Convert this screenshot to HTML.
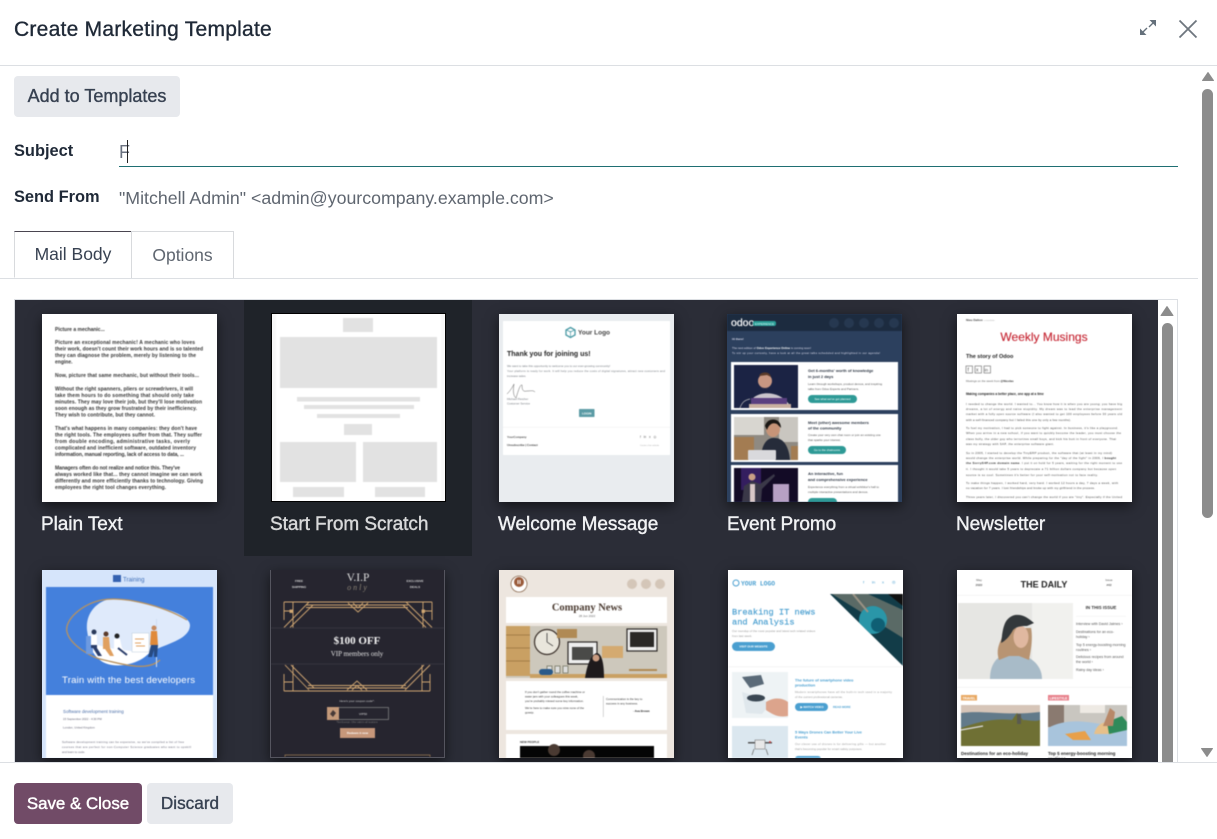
<!DOCTYPE html>
<html lang="en"><head><meta charset="utf-8"><title>Create Marketing Template</title>
<style>
html,body{margin:0;padding:0;width:1217px;height:839px;overflow:hidden;background:#fff;font-family:"Liberation Sans",sans-serif;color:#374151}
.a{position:absolute}
.btn{position:absolute;border-radius:4px;display:flex;align-items:center;justify-content:center;font-size:18px;-webkit-text-stroke:.35px currentColor;box-sizing:border-box}
.sec{background:#e7e9ed;color:#374151}
.lab{position:absolute;font-size:16.4px;color:#1f2937;font-weight:bold;line-height:22px;white-space:nowrap}
.tab{position:absolute;top:231px;height:47px;box-sizing:border-box;border:1px solid #d8dadd;display:flex;align-items:center;justify-content:center;font-size:17.5px;background:#fff}
.panel{position:absolute;left:15px;top:300px;width:1143px;height:462px;background:#2b2d37;overflow:hidden}
.sel{position:absolute;left:229px;top:0;width:228px;height:256px;background:#1f2329}
.t{position:absolute;width:175px;height:188px;box-shadow:0 4px 12px rgba(0,0,0,.55);overflow:hidden}
.t svg{display:block;width:175px;height:188px;filter:blur(.4px)}
.n{position:absolute;top:213px;font-size:19px;line-height:24px;color:#f1f2f4;white-space:nowrap;-webkit-text-stroke:.4px currentColor;letter-spacing:-.06px}
text{font-family:"Liberation Sans",sans-serif}
.se{font-family:"Liberation Serif",serif}
.mo{font-family:"Liberation Mono",monospace}
.b{font-weight:bold}
.m{text-anchor:middle}
</style></head><body>

<div class="a" style="left:14px;top:16px;font-size:21px;line-height:28px;color:#1f2937;-webkit-text-stroke:.35px #1f2937;white-space:nowrap;letter-spacing:.25px">Create Marketing Template</div>
<svg class="a" style="left:1138px;top:18px" width="22" height="22" viewBox="0 0 22 22"><path d="M2 17V10.500L8.500 17ZM18 2V8.500L11.500 2Z" fill="#65707b"/><path d="M4.500 14.500L9 10M15.500 4.500L11 9" stroke="#65707b" stroke-width="1.400" fill="none"/></svg>
<svg class="a" style="left:1177px;top:18px" width="22" height="22" viewBox="0 0 22 22"><path d="M2.500 2.500L19.500 19.500M19.500 2.500L2.500 19.500" stroke="#6e767e" stroke-width="1.800" fill="none"/></svg>
<div class="a" style="left:0;top:65px;width:1217px;height:1px;background:#dcdfe3"></div>

<div class="btn sec" style="left:14px;top:76px;width:166px;height:41px">Add to Templates</div>
<div class="lab" style="left:14px;top:140px">Subject</div>
<div class="a" style="left:119px;top:140px;font-size:18px;line-height:24px;color:#6b7280">F</div>
<div class="a" style="left:127px;top:140px;width:1px;height:23px;background:#222"></div>
<div class="a" style="left:119px;top:165.500px;width:1059px;height:1px;background:#1f6f73"></div>
<div class="lab" style="left:14px;top:186px">Send From</div>
<div class="a" style="left:119px;top:186px;font-size:17.750px;line-height:24px;color:#5f6670;white-space:nowrap">"Mitchell Admin" &lt;admin@yourcompany.example.com&gt;</div>

<div class="a" style="left:0;top:278px;width:1198px;height:1px;background:#dcdfe3"></div>
<div class="tab" style="left:14px;width:118px;border-top-color:#4a4550;border-bottom-color:#fff;color:#374151">Mail Body</div>
<div class="tab" style="left:131px;width:103px;color:#5f6670;border-bottom:0">Options</div>

<div class="a" style="left:14px;top:299px;width:1164px;height:464px;box-sizing:border-box;border:1px solid #dcdfe3;border-bottom:0"></div>
<div class="panel">
<div class="sel"></div>

<!-- Plain Text -->
<div class="t" style="left:27px;top:14px;background:#fff"><svg viewBox="0 0 175 188" style="filter:blur(.6px)"><g font-size="5" fill="#333" style="font-weight:bold">
<text x="13" y="17">Picture a mechanic...</text>
<text x="13" y="30" textLength="140">Picture an exceptional mechanic! A mechanic who loves</text>
<text x="13" y="36.500" textLength="148">their work, doesn't count their work hours and is so talented</text>
<text x="13" y="43" textLength="141">they can diagnose the problem, merely by listening to the</text>
<text x="13" y="49.500">engine.</text>
<text x="13" y="63" textLength="144">Now, picture that same mechanic, but without their tools...</text>
<text x="13" y="76.500" textLength="138">Without the right spanners, pliers or screwdrivers, it will</text>
<text x="13" y="83" textLength="139">take them hours to do something that should only take</text>
<text x="13" y="89.500" textLength="147">minutes. They may love their job, but they'll lose motivation</text>
<text x="13" y="96" textLength="142">soon enough as they grow frustrated by their inefficiency.</text>
<text x="13" y="102.500" textLength="100">They wish to contribute, but they cannot.</text>
<text x="13" y="116" textLength="142">That's what happens in many companies: they don't have</text>
<text x="13" y="122.500" textLength="147">the right tools. The employees suffer from that. They suffer</text>
<text x="13" y="129" textLength="135">from double encoding, administrative tasks, overly</text>
<text x="13" y="135.500" textLength="141">complicated and inefficient software, outdated inventory</text>
<text x="13" y="142" textLength="129">information, manual reporting, lack of access to data, ...</text>
<text x="13" y="155.500" textLength="125">Managers often do not realize and notice this. They've</text>
<text x="13" y="162" textLength="147">always worked like that... they cannot imagine we can work</text>
<text x="13" y="168.500" textLength="148">differently and more efficiently thanks to technology. Giving</text>
<text x="13" y="175" textLength="111">employees the right tool changes everything.</text>
</g></svg></div>
<div class="n" style="left:26px">Plain Text</div>

<!-- Scratch -->
<div class="t" style="left:256px;top:13px;height:189px;box-sizing:border-box;border:1px solid #000;background:#fff;box-shadow:none"><svg viewBox="1 1 173 187" style="width:173px;height:187px" preserveAspectRatio="none"><rect width="175" height="188" fill="#f7f7f7"/><rect x="5" y="0" width="165" height="188" fill="#fff"/><g fill="#e2e2e2"><rect x="72" y="5" width="30" height="14"/><rect x="9" y="24" width="157" height="51"/><rect x="26" y="84" width="123" height="4.500"/><rect x="33" y="92" width="110" height="4"/><rect x="46" y="101" width="83" height="4"/><rect x="73" y="111" width="28" height="11"/><rect x="9" y="129" width="76" height="40"/><rect x="92" y="129" width="74" height="40"/><rect x="22" y="174" width="51" height="10"/><rect x="104" y="174" width="50" height="10"/></g></svg></div>
<div class="n" style="left:255px;color:#d8d9da">Start From Scratch</div>

<!-- Welcome -->
<div class="t" style="left:484px;top:14px;background:#e9ecef"><svg viewBox="0 0 175 188"><rect x="4" y="7" width="167" height="134" fill="#fff"/>
<path d="M71.500 13.500L76 16V21L71.500 23.500L67 21V16Z" fill="none" stroke="#4a9aa5" stroke-width="1.300"/><path d="M71.500 17V23M67.500 16L71.500 18L75.500 16" fill="none" stroke="#4a9aa5" stroke-width=".7"/>
<text x="79" y="20.500" font-size="6.500" class="b" fill="#444">Your Logo</text>
<text x="8" y="42" font-size="7" class="b" fill="#222">Thank you for joining us!</text>
<g font-size="2.900" fill="#777c82"><text x="8" y="53">We want to take this opportunity to welcome you to our ever-growing community!</text><text x="8" y="58" textLength="158">Your platform is ready for work. It will help you reduce the costs of digital signatures, attract new customers and</text><text x="8" y="63">increase sales.</text><text x="8" y="86">Michael Fletcher</text><text x="8" y="90.500">Customer Service</text></g>
<path d="M8 80C12 76 14 72 15 70C14 76 14 82 17 84C19 78 21 70 23 71C23 76 24 78 28 77C32 77 34 76 36 78" fill="none" stroke="#666" stroke-width=".5"/>
<rect x="80" y="95" width="15.500" height="8" rx=".6" fill="#5b9ba5"/><text x="87.700" y="100.500" font-size="3" class="b m" fill="#fff">LOGIN</text>
<rect x="4" y="113" width="167" height=".6" fill="#eee"/>
<text x="8" y="124" font-size="2.900" class="b" fill="#555">YourCompany</text><text x="8" y="132" font-size="2.900" class="b" fill="#444">Unsubscribe | Contact</text><text x="141" y="124" font-size="3.300" fill="#666">f&#160;&#160;&#160;in&#160;&#160;&#160;x&#160;&#160;&#160;◎</text><text x="141" y="132" font-size="2" fill="#aaa">Create a free website</text>
</svg></div>
<div class="n" style="left:483px">Welcome Message</div>

<!-- Event -->
<div class="t" style="left:712px;top:14px;background:#2c405e"><svg viewBox="0 0 175 188"><rect width="175" height="17" fill="#1c2b3f"/>
<text x="4" y="12" font-size="10.500" fill="#fff" stroke="#fff" stroke-width=".2">odoo</text><rect x="26" y="7" width="23" height="5" rx="2" fill="#2a9d96"/><text x="37.500" y="11" font-size="3" class="m" fill="#dff">EXPERIENCE</text>
<g fill="#263850"><circle cx="107" cy="9" r="5"/><circle cx="122" cy="9" r="5"/><circle cx="137" cy="9" r="5"/><circle cx="152" cy="9" r="5"/><circle cx="167" cy="9" r="5"/></g>
<g font-size="2.900" fill="#dde"><text x="5" y="26" class="b">Hi there!</text><text x="5" y="35">The next edition of <tspan class="b" fill="#fff">Odoo Experience Online</tspan> is coming soon!</text><text x="5" y="40" textLength="148">To stir up your curiosity, have a look at all the great talks scheduled and highlighted in our agenda!</text></g>
<rect x="4" y="48" width="167" height="48" fill="#fff"/><rect x="4" y="100" width="167" height="48" fill="#fff"/><rect x="4" y="151" width="167" height="40" fill="#fff"/>
<rect x="7" y="51" width="64" height="43" fill="#1b2344"/><circle cx="38" cy="67" r="7" fill="#c99782"/><path d="M32 62C34 57 43 57 44 63L40 61Z" fill="#5a3b2a"/><path d="M33 72C34 76 42 76 43 72L42 74L38 75L34 74Z" fill="#76503a"/><path d="M24 88C26 78 50 74 62 90V94H24Z" fill="#c9c4cb"/><rect x="24" y="84" width="36" height="6" fill="#5a3f80"/><rect x="22" y="90" width="42" height="4" fill="#c9b0a0"/><path d="M13 94C15 88 18 86 23 85" stroke="#bbb" fill="none" stroke-width=".7"/>
<rect x="7" y="103" width="64" height="43" fill="#8f8a82"/><rect x="7" y="103" width="30" height="18" fill="#d8d6d0"/><rect x="52" y="103" width="19" height="25" fill="#c9c6c0"/><rect x="7" y="123" width="20" height="23" fill="#a37c52"/><rect x="64" y="132" width="7" height="14" fill="#a37c52"/><ellipse cx="46" cy="115" rx="7" ry="8" fill="#c69478"/><path d="M38 112C40 103 54 103 54 114L50 110C46 108 42 110 40 116Z" fill="#1a1714"/><path d="M34 146C34 128 42 123 48 124C56 124 62 132 63 146Z" fill="#262c3a"/><rect x="21" y="136" width="28" height="10" rx="1" fill="#d9d9dc"/>
<rect x="7" y="154" width="64" height="34" fill="#130b26"/><rect x="14" y="154" width="20" height="22" fill="#4b2b85" opacity=".6"/><circle cx="25" cy="163" r="3.500" fill="#c99f86"/><path d="M15 188L17 172L25 167L33 170L47 160L48 162L35 175L34 188Z" fill="#3a3848"/><rect x="23" y="170" width="5" height="18" fill="#d8c7c7"/><rect x="46" y="170" width="16" height="18" fill="#b7a0c4"/>
<g font-size="4" class="b" fill="#2a3340"><text x="81" y="58">Get 6-months' worth of knowledge</text><text x="81" y="64">in just 2 days</text><text x="81" y="110">Meet (other) awesome members</text><text x="81" y="115.500">of the community</text><text x="81" y="161">An interactive, fun</text><text x="81" y="167">and comprehensive experience</text></g>
<g font-size="3" fill="#555"><text x="81" y="71">Learn through workshops, product demos, and inspiring</text><text x="81" y="76">talks from Odoo Experts and Partners.</text><text x="81" y="122">Create your very own chat room or join an existing one</text><text x="81" y="127">that sparks your interest.</text><text x="81" y="174">Experience everything from a virtual exhibitor's hall to</text><text x="81" y="179">multiple interactive presentations and demos.</text></g>
<g fill="#2e9a96"><rect x="81" y="81" width="49" height="8" rx="4"/><rect x="81" y="132" width="38" height="8" rx="4"/><rect x="81" y="184" width="29" height="8" rx="4"/></g>
<g font-size="2.900" fill="#fff" class="m"><text x="105.500" y="86">See what we've got planned</text><text x="100" y="137">Go to the chatrooms</text></g>
</svg></div>
<div class="n" style="left:712px">Event Promo</div>

<!-- Newsletter -->
<div class="t" style="left:942px;top:14px;background:#fff"><svg viewBox="0 0 175 188"><text x="9" y="7" font-size="3" class="b" fill="#444">Nieu Dalton</text><text x="27" y="7" font-size="2" fill="#aaa">a newsletter</text>
<text x="87" y="27" font-size="12" class="m" fill="#c4222f" stroke="#c4222f" stroke-width=".12">Weekly Musings</text>
<text x="9" y="44" font-size="5.500" class="b" fill="#222">The story of Odoo</text>
<g fill="none" stroke="#666" stroke-width=".6"><rect x="9" y="52" width="6.500" height="7"/><rect x="18" y="52" width="6.500" height="7"/><rect x="27" y="52" width="6.500" height="7"/></g><text x="10.500" y="57.500" font-size="5" fill="#555">f</text><text x="19" y="57.500" font-size="5" fill="#555">x</text><text x="27.500" y="57.500" font-size="4.500" fill="#555">in</text>
<text x="9" y="68" font-size="2.900" fill="#666">Musings on the week from <tspan class="b" fill="#333">@Nicolas</tspan></text>
<text x="9" y="81" font-size="3.200" class="b" fill="#222">Making companies a better place, one app at a time</text>
<g font-size="3" fill="#444">
<text x="9" y="91" textLength="156">I needed to change the world. I wanted to... You know how it is when you are young; you have big</text>
<text x="9" y="96" textLength="156">dreams, a lot of energy and naive stupidity. My dream was to lead the enterprise management</text>
<text x="9" y="101" textLength="156">market with a fully open source software (I also wanted to get 100 employees before 30 years old</text>
<text x="9" y="107" textLength="105">with a self-financed company but I failed this one by only a few months).</text>
<text x="9" y="115" textLength="152">To fuel my motivation, I had to pick someone to fight against. In business, it's like a playground.</text>
<text x="9" y="120" textLength="155">When you arrive in a new school, if you want to quickly become the leader, you must choose the</text>
<text x="9" y="126" textLength="150">class bully, the older guy who terrorizes small boys, and kick his butt in front of everyone. That</text>
<text x="9" y="131" textLength="88">was my strategy with SAP, the enterprise software giant.</text>
<text x="9" y="140" textLength="146">So in 2005, I started to develop the TinyERP product, the software that (at least in my mind)</text>
<text x="9" y="145" textLength="150">would change the enterprise world. While preparing for the "day of the fight" in 2006, I <tspan class="b" fill="#222">bought</tspan></text>
<text x="9" y="150" textLength="156"><tspan class="b" fill="#222">the SorryS4P.com domain name</tspan>. I put it on hold for 5 years, waiting for the right moment to use</text>
<text x="9" y="156" textLength="150">it. I thought it would take 5 years to deprecate a 71 billion dollars company but because open</text>
<text x="9" y="162" textLength="132">source is so cool. Sometimes it's better for your self-motivation not to face reality.</text>
<text x="9" y="170" textLength="152">To make things happen, I worked hard, very hard. I worked 12 hours a day, 7 days a week, with</text>
<text x="9" y="175" textLength="129">no vacation for 7 years. I lost friendships and broke up with my girlfriend in the process.</text>
<text x="9" y="184" textLength="156">Three years later, I discovered you can't change the world if you are "tiny". Especially if the United</text>
</g></svg></div>
<div class="n" style="left:941px">Newsletter</div>

<!-- Training -->
<div class="t" style="left:27px;top:270px;background:#d6e5fb"><svg viewBox="0 0 175 188"><rect x="71" y="5" width="8" height="7" fill="#3562b0"/><text x="81" y="11.500" font-size="6" fill="#3f6fb8">Training</text>
<rect x="4" y="17" width="167" height="108" fill="#4480dc"/><rect x="4" y="125" width="167" height="63" fill="#fff"/>
<path d="M45 60C43 40 60 27 75 29C100 32 148 42 148 55C148 72 115 75 105 85C95 95 70 100 58 90C50 84 47 75 45 60Z" fill="#dfeafb"/><path d="M47 72C60 78 90 82 108 82C98 94 70 100 58 90C53 86 49 80 47 72Z" fill="#fff"/>
<path d="M145 50C120 35 80 26 60 30C40 34 22 50 25 62C28 75 50 88 62 90C80 94 105 102 118 90" fill="none" stroke="#b8925f" stroke-width="1.300"/>
<rect x="44" y="66" width="7" height="18" fill="#6d9ae0"/><rect x="114" y="49" width="1" height="48" fill="#cfdcf1"/>
<g><circle cx="52" cy="62" r="2.500" fill="#2a3a5a"/><path d="M49 65H55V78L60 86H56L51 78H49Z" fill="#2a3d6a"/><path d="M49 65H55V75H49Z" fill="#fff"/><circle cx="64" cy="64" r="2.500" fill="#5a3a2a"/><path d="M61 67H67L68 78L72 86H68L63 79H61Z" fill="#e0a060"/><circle cx="75" cy="66" r="2.500" fill="#222"/><path d="M72 69H78L80 78L86 84H82L75 79H72Z" fill="#fff"/><path d="M76 78L85 85" stroke="#2a3d6a" stroke-width="2"/></g>
<rect x="90" y="63" width="17" height="19" fill="#fff" stroke="#bcd" stroke-width=".5"/><path d="M93 69H102M93 73H99M94 76H103" stroke="#e0a060" stroke-width=".9"/><circle cx="112" cy="58" r="2.500" fill="#c68a60"/><path d="M109 61H115L116 75H108Z" fill="#e08a3a"/><path d="M109 75H116L115 87H112L112 80L110 87H106Z" fill="#274a82"/>
<text x="86.500" y="113" font-size="9.600" class="m" fill="#fff" textLength="133">Train with the best developers</text>
<text x="21" y="143" font-size="4.500" fill="#4a6ea8">Software development training</text>
<g font-size="2.900" fill="#667"><text x="21" y="150">15 September 2022 - 4:30 PM</text><text x="21" y="158.500">London, United Kingdom</text><text x="20" y="173" textLength="122">Software development training can be expensive, so we've compiled a list of free</text><text x="20" y="178" textLength="129">courses that are perfect for non-Computer Science graduates who want to upskill</text><text x="20" y="183">and learn to code.</text></g>
</svg></div>

<!-- VIP -->
<div class="t" style="left:255px;top:270px;background:#26252f;box-sizing:border-box;border-left:1px solid #55555f;border-right:1px solid #55555f;border-bottom:1px solid #55555f"><svg viewBox="1 0 173 187" style="width:173px;height:187px" preserveAspectRatio="none">
<g font-size="3" fill="#ddd" class="m se b"><text x="29" y="12">FREE</text><text x="29" y="18">SHIPPING</text><text x="145" y="12">EXCLUSIVE</text><text x="145" y="18">DEALS</text></g>
<text x="88" y="11" font-size="11.500" class="m se" fill="#ddd">V.I.P</text><text x="88" y="20" font-size="8" font-style="italic" class="m se" fill="#8d8577" letter-spacing="2">only</text>
<g fill="none" stroke="#d2a873" stroke-width=".9"><path d="M14 32H162M36 35H138M36 37.500H138M14 32V50M23 32V58M162 32V50M153 32V58M14 41H23M162 41H153"/><path d="M14 57.500L39 32M20 57.500L43 35M162 57.500L136 32M156 57.500L133 35"/><path d="M78 33L88 42L98 33M83 33L88 38L93 33"/><rect x="20" y="40" width="2.500" height="2.500" fill="#d2a873"/><rect x="152" y="40" width="2.500" height="2.500" fill="#d2a873"/></g>
<path d="M0 58H175M0 94H175" stroke="#3c3c46" stroke-width=".8"/>
<text x="87" y="74" font-size="11" class="m se b" fill="#f4f4f4">$100 OFF</text><text x="87" y="86" font-size="7" class="m se" fill="#e2e2e2">VIP members only</text>
<g fill="none" stroke="#d2a873" stroke-width=".9"><path d="M14 121H160M38 118H136M38 115.500H136M14 104V121M23 95V121M160 104V121M152 95V121M14 112H23M160 112H152"/><path d="M15 95L39 120M21 95L44 118M160 95L135 120M154 95L131 118"/><path d="M77 120L87 111L97 120M82 120L87 115.500L92 120"/></g>
<text x="87" y="132" font-size="3" class="m" fill="#ccc">Here's your coupon code*:</text>
<rect x="57.500" y="137.500" width="61" height="12" fill="none" stroke="#999" stroke-width=".6"/><rect x="57" y="137" width="12" height="13" fill="#c49a7a"/><path d="M60 144L63 140L66 143L63 147Z" fill="#473a38"/><text x="93" y="145" font-size="3" class="m" fill="#ddd">VIP50</text>
<text x="87" y="153" font-size="2.400" class="m" fill="#777">*Not Exempt. Offer valid in all locations</text>
<rect x="70" y="158" width="35" height="10" fill="#c6977a"/><text x="87.500" y="164" font-size="3" class="m b" fill="#fff">Redeem it now</text>
<rect x="15" y="185" width="145" height="6" fill="none" stroke="#b98f5d" stroke-width=".6"/>
</svg></div>

<!-- Company News -->
<div class="t" style="left:484px;top:270px;background:#ede6df"><svg viewBox="0 0 175 188"><circle cx="20" cy="14" r="8" fill="#fff" stroke="#8b6a50" stroke-width=".8"/><circle cx="20" cy="12" r="5" fill="#9a5a3a"/><rect x="18.500" y="10" width="1" height="4" fill="#fff"/><rect x="20.500" y="10" width="1" height="4" fill="#fff"/>
<g fill="#d4c6b8"><circle cx="133" cy="14" r="5"/><circle cx="147" cy="14" r="5"/><circle cx="161" cy="14" r="5"/></g>
<rect x="7" y="27" width="161" height="26" fill="#fff"/><text x="88" y="40.500" font-size="10.500" class="m se b" fill="#4a3a30">Company News</text><text x="88" y="47" font-size="3" class="m" fill="#666">28 Jun 2022</text>
<rect x="7" y="56" width="161" height="52" fill="#cdc8bc"/><rect x="7" y="56" width="24" height="50" fill="#c9a063"/><path d="M7 65H31M7 78H31M7 91H31" stroke="#96703e" stroke-width=".8"/><circle cx="48" cy="72" r="12.500" fill="#e9e6dc" stroke="#3a302a" stroke-width="1.200"/><path d="M48 72V63M48 72L54 76" stroke="#222" stroke-width=".7"/><rect x="69" y="72" width="29" height="22" fill="#eee" stroke="#2e2a28" stroke-width="1.200"/><rect x="73" y="77" width="21" height="13" fill="#4a4a48"/><rect x="128" y="59" width="30" height="22" fill="#eee" stroke="#2e2a28" stroke-width="1.200"/><rect x="131" y="62" width="24" height="15" fill="#2a2826"/><rect x="103" y="76" width="21" height="12" fill="#d4aa70"/><rect x="58" y="59" width="20" height="9" fill="#b08a54"/><rect x="48" y="96" width="5" height="7" fill="#ddd" stroke="#887"/><rect x="56" y="96" width="5" height="7" fill="#ddd" stroke="#887"/><rect x="64" y="96" width="5" height="7" fill="#ddd" stroke="#887"/><rect x="130" y="99" width="28" height="2" fill="#b08a54"/><rect x="31" y="104" width="137" height="4" fill="#c9a063"/><rect x="40" y="99" width="14" height="6" rx="3" fill="#2a5a8a"/><path d="M86 108C88 95 92 84 98 83C104 84 105 98 105 108Z" fill="#1e1a1c"/><circle cx="97" cy="88" r="3.500" fill="#c99b80"/>
<rect x="7" y="111" width="161" height="49" fill="#fff"/>
<g font-size="2.900" fill="#333"><text x="26" y="123">If you don't gather round the coffee machine or</text><text x="26" y="127.500">water jars with your colleagues this week,</text><text x="26" y="132">you're probably missed some key information.</text><text x="26" y="139">We're here to make sure you miss none of the</text><text x="26" y="143.500">gossip.</text><text x="107" y="130">Communication is the key to</text><text x="107" y="134.500">success in any business.</text></g><text x="134" y="142" font-size="2.900" class="b" fill="#222">- Ava Brown</text>
<rect x="104" y="126" width=".6" height="21" fill="#bbb"/>
<rect x="7" y="164" width="161" height="24" fill="#fff"/><text x="21" y="173" font-size="2.900" class="b" fill="#333">NEW PEOPLE</text><rect x="21" y="176" width="134" height="12" fill="#050505"/><circle cx="55" cy="180" r="6" fill="#4a3a32"/><circle cx="90" cy="186" r="6" fill="#4a3a32"/>
</svg></div>

<!-- IT news -->
<div class="t" style="left:713px;top:270px;background:#fff"><svg viewBox="0 0 175 188"><circle cx="8" cy="13" r="3" fill="none" stroke="#4a9fd0"/><text x="13" y="15.500" font-size="6.300" class="mo b" fill="#4a9fd0">YOUR LOGO</text><g font-size="4" fill="#4a9fd0"><text x="135" y="13.500">f</text><text x="144" y="13.500">in</text><text x="154" y="13.500">x</text><text x="164" y="13.500">◎</text></g>
<defs><clipPath id="c"><path d="M102 24H175V96Z"/></clipPath></defs><g clip-path="url(#c)"><rect x="100" y="24" width="75" height="72" fill="#123c48"/><path d="M104 24L175 68V40L140 24Z" fill="#5a6a66"/><circle cx="145" cy="50" r="14" fill="#2a96a8"/><circle cx="150" cy="55" r="7" fill="#0f5f74"/><path d="M160 24L175 36V24Z" fill="#111"/><path d="M125 24L140 42" stroke="#9a9284" stroke-width="2"/></g>
<text x="4" y="44.500" font-size="8.700" class="mo" fill="#4a9fd0" stroke="#4a9fd0" stroke-width=".18">Breaking IT news</text><text x="4" y="54.500" font-size="8.700" class="mo" fill="#4a9fd0" stroke="#4a9fd0" stroke-width=".18">and Analysis</text>
<g font-size="3" fill="#999"><text x="4" y="62">Our roundup of the most popular and latest tech related videos</text><text x="4" y="67">from last week.</text></g><rect x="4" y="72" width="43" height="9" rx="4.500" fill="#4a9fd0"/><text x="25.500" y="77.500" font-size="2.900" class="m b" fill="#fff">VISIT OUR WEBSITE</text><rect y="96.500" width="175" height=".6" fill="#eee"/>
<rect x="4" y="102" width="56" height="46" fill="#eef3f5"/><path d="M14 107L33 105L36 114L22 118Z" fill="#5a6a78"/><path d="M14 122C24 125 38 130 42 134L34 144L18 143Z" fill="#dfe7ec"/><ellipse cx="28" cy="128" rx="9" ry="3.500" fill="#394652"/><path d="M38 132C48 126 56 129 60 132V146C50 148 44 144 38 140Z" fill="#dca48c"/>
<g font-size="3.900" class="mo b" fill="#4a9fd0"><text x="67" y="111.500">The future of smartphone video</text><text x="67" y="116.500">production</text><text x="67" y="163.500">5 Ways Drones Can Better Your Live</text><text x="67" y="168.500">Events</text></g>
<g font-size="3" fill="#999"><text x="67" y="123" textLength="97">Modern smartphones have all the built-in tech used in a majority</text><text x="67" y="128">of the current professional cameras.</text><text x="67" y="175" textLength="91">Our clever use of drones is for delivering gifts — but another</text><text x="67" y="180">that's becoming popular for smart safety purposes.</text></g>
<rect x="67" y="133" width="33" height="8" rx="4" fill="#4a9fd0"/><text x="84" y="138" font-size="2.900" class="m b" fill="#fff">▶ WATCH VIDEO</text><text x="105" y="138" font-size="2.900" class="b" fill="#4a9fd0">READ MORE</text><rect x="67" y="186" width="26" height="6" rx="3" fill="#4a9fd0"/>
<rect x="4" y="156" width="56" height="32" fill="#dbe7ef"/><rect x="20" y="172" width="24" height="1.500" fill="#555"/><rect x="27" y="170" width="10" height="9" fill="#e8e8e8" stroke="#666" stroke-width=".5"/><path d="M26 179L24 185M38 179L40 185" stroke="#666" stroke-width=".7"/><circle cx="42" cy="172" r="1" fill="#c44"/>
</svg></div>

<!-- Daily -->
<div class="t" style="left:942px;top:270px;background:#fff"><svg viewBox="0 0 175 188"><g font-size="3" class="m" fill="#555"><text x="22" y="11">May</text><text x="22" y="16" class="b">2022</text><text x="152" y="11">Issue</text><text x="152" y="16" class="b">#42</text></g><text x="87" y="17.500" font-size="9" class="m b" fill="#222">THE DAILY</text><rect y="25" width="175" height=".7" fill="#f0f0f0"/>
<rect x="1" y="33" width="115" height="76" fill="#e6e6e3"/><rect x="75" y="33" width="41" height="76" fill="#f1f1ee"/><path d="M33 109C33 92 42 84 54 83C68 83 85 92 85 109Z" fill="#a8bbc8"/><path d="M42 90C38 78 44 70 50 58L74 58C76 68 74 80 72 90L62 86L52 86Z" fill="#b89472"/><ellipse cx="64" cy="67" rx="7.500" ry="11" fill="#e0b8a0"/><path d="M44 73C46 60 46 48 58 45C66 44 71 48 77 53L70 56C66 56 60 56 56 60C54 64 50 70 44 73Z" fill="#33383b"/>
<text x="144" y="39" font-size="4.500" class="m b" fill="#333">IN THIS ISSUE</text><rect x="119" y="46" width="50" height=".5" fill="#eee"/>
<g font-size="3.600" fill="#555"><text x="119" y="55">Interview with David Jaimes  ›</text><text x="119" y="63">Destinations for an eco-</text><text x="119" y="68">holiday  ›</text><text x="119" y="76">Top 5 energy-boosting morning</text><text x="119" y="81">routines  ›</text><text x="119" y="88">Delicious recipes from around</text><text x="119" y="93">the world  ›</text><text x="119" y="101">Rainy day ideas  ›</text></g>
<rect y="117" width="175" height=".7" fill="#f0f0f0"/><rect x="4" y="125" width="16" height="5.500" fill="#e8a862"/><text x="12" y="129.500" font-size="3.300" class="m b" fill="#fff">TRAVEL</text><rect x="91" y="125" width="21" height="5.500" fill="#e77f8a"/><text x="101.500" y="129.500" font-size="3.300" class="m b" fill="#fff">LIFESTYLE</text>
<rect x="4" y="135" width="79" height="41" fill="#d6c5b8"/><path d="M4 143C25 140 50 146 83 142V176H4Z" fill="#627a8a"/><path d="M4 158C20 152 38 148 55 150L60 143L66 150C72 150 78 152 83 150V176H4Z" fill="#6f7034"/><path d="M4 160L26 156" stroke="#ddd" stroke-width="1.200"/><rect x="60" y="144" width="4" height="10" fill="#5a5a50"/>
<rect x="91" y="135" width="79" height="41" fill="#c9c6c0"/><rect x="91" y="135" width="16" height="22" fill="#8a7a70"/><rect x="123" y="135" width="25" height="8" fill="#eeeae4"/><path d="M91 176V158C110 148 130 150 170 160V176Z" fill="#a8c4dc"/><path d="M137 164C140 152 150 150 156 155L155 164Z" fill="#e6c08a"/><path d="M150 152L165 146L170 152V160L152 164Z" fill="#2f8a5a"/><path d="M108 164L128 161L134 170H116Z" fill="#e8a04a"/><path d="M146 156L153 138L158 142L156 156Z" fill="#b88868"/>
<text x="4" y="185" font-size="4.500" class="b" fill="#222">Destinations for an eco-holiday</text><text x="91" y="185" font-size="4.500" class="b" fill="#222">Top 5 energy-boosting morning</text><text x="91" y="190" font-size="4.500" class="b" fill="#222">routines</text>
</svg></div>
</div>

<!-- inner scrollbar -->
<svg class="a" style="left:1160px;top:305px" width="14" height="12" viewBox="0 0 14 12"><path d="M7 1.500L13 10.500H1Z" fill="#8c8c8c" stroke="#8c8c8c" stroke-linejoin="round"/></svg>
<div class="a" style="left:1162px;top:323px;width:11px;height:439px;background:#8c8c8c;border-radius:6px 6px 0 0"></div>
<!-- page scrollbar -->
<svg class="a" style="left:1201px;top:71px" width="14" height="12" viewBox="0 0 14 12"><path d="M7 1.500L12.500 9.500H1.500Z" fill="#8c8c8c" stroke="#8c8c8c" stroke-linejoin="round"/></svg>
<div class="a" style="left:1202px;top:89px;width:11px;height:429px;background:#8c8c8c;border-radius:6px"></div>
<svg class="a" style="left:1200px;top:746px" width="14" height="12" viewBox="0 0 14 12"><path d="M7 10.500L12.500 2.500H1.500Z" fill="#8c8c8c" stroke="#8c8c8c" stroke-linejoin="round"/></svg>

<!-- footer -->
<div class="a" style="left:0;top:762px;width:1217px;height:77px;background:#fff;border-top:1px solid #dcdfe3;box-sizing:border-box"></div>
<div class="btn" style="left:14px;top:783px;width:128px;height:41px;background:#714b67;color:#fff;font-size:16.900px;-webkit-text-stroke:.45px #fff">Save &amp; Close</div>
<div class="btn sec" style="left:147px;top:783px;width:86px;height:41px;font-size:17.200px">Discard</div>
</body></html>
